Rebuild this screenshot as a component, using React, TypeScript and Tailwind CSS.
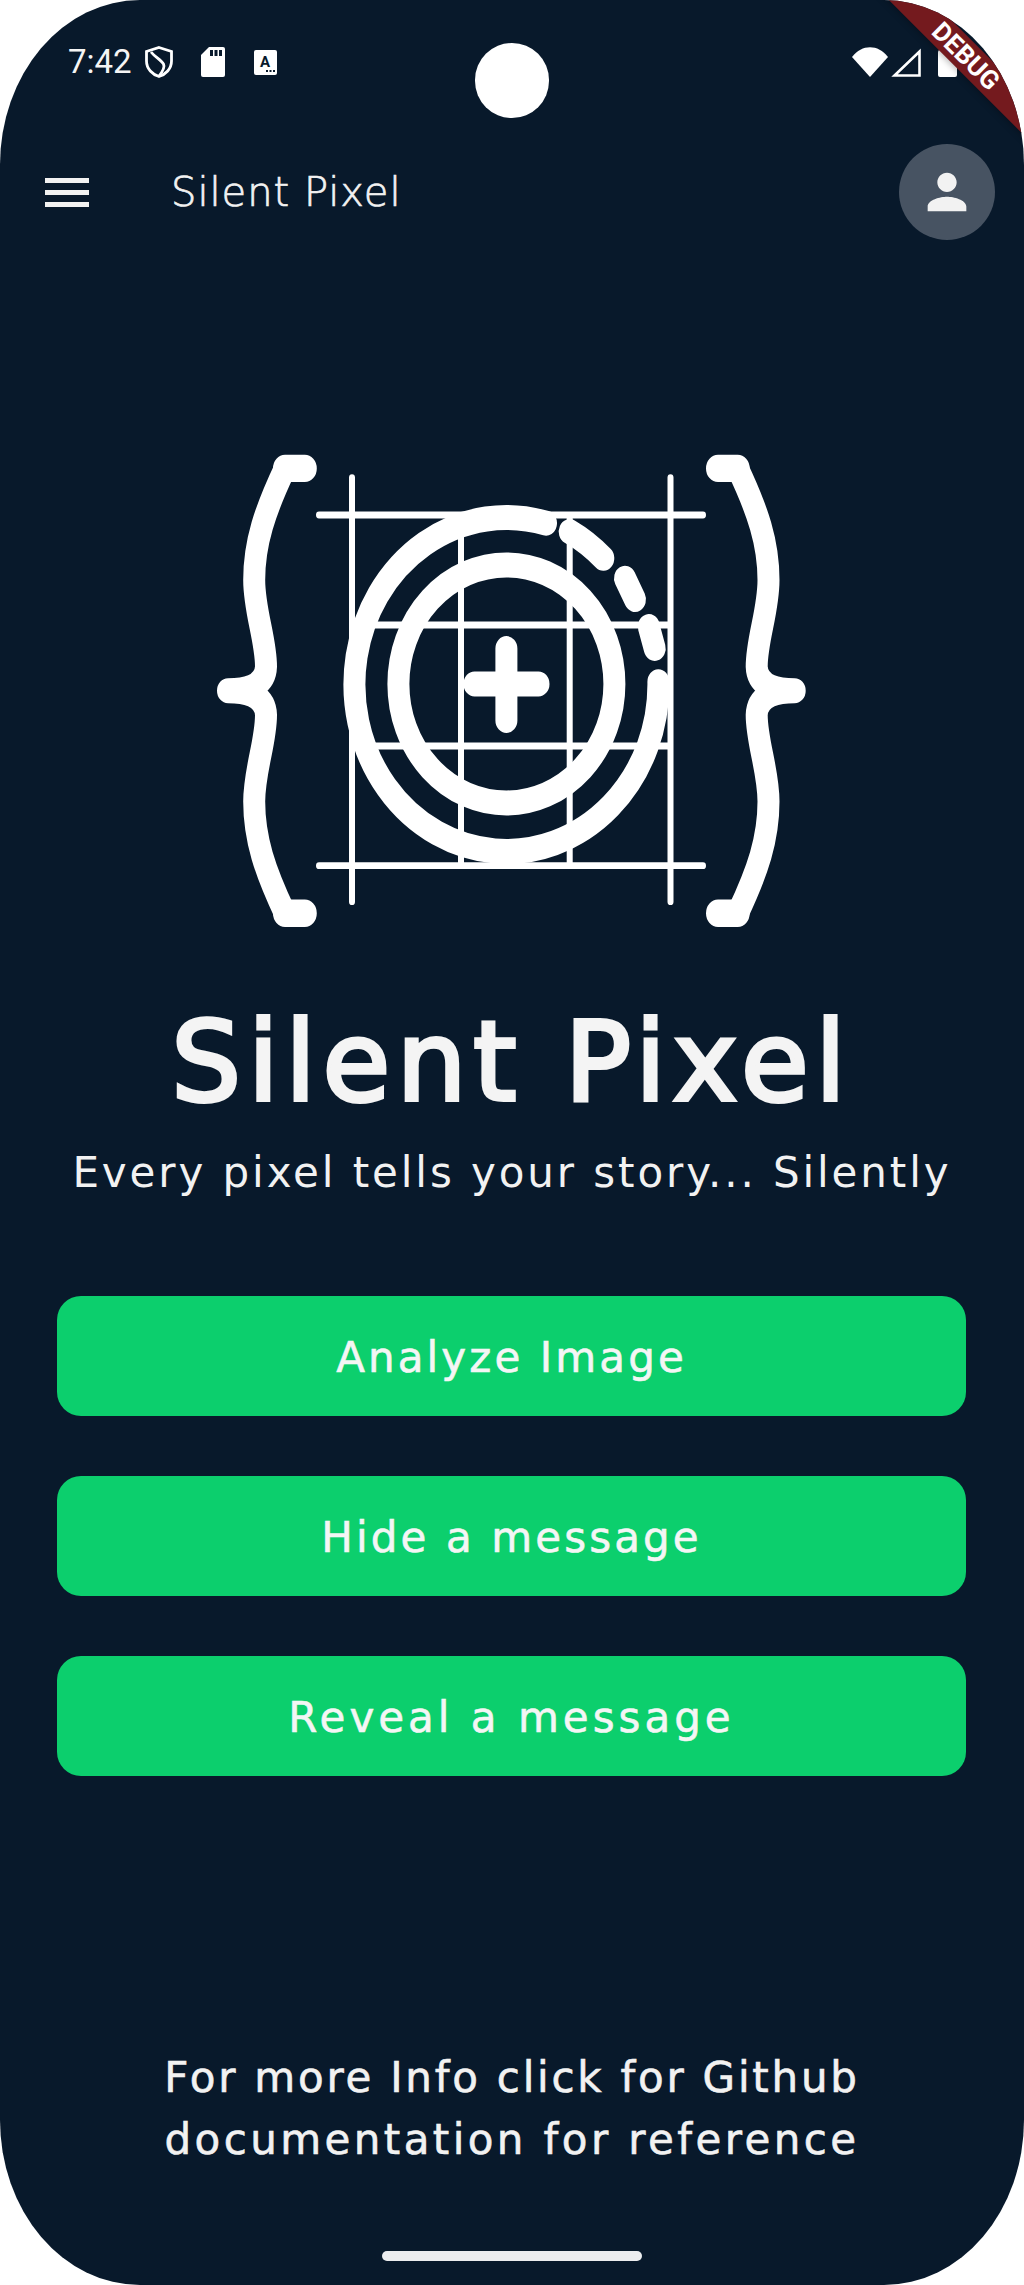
import React from 'react'

const font = "font-['DejaVu_Sans',sans-serif]"

const StatusIcons = () => (
  <div className="flex items-start">
    <svg width="36" height="30" viewBox="0 0 36 30" fill="#fff">
      <path d="M0 10 C10 -3 26 -3 36 10 L18 30 Z" />
    </svg>
    <svg width="30" height="29" viewBox="0 0 30 29" className="ml-[3px] mt-[1px]" fill="none" stroke="#fff" strokeWidth="2.6">
      <path d="M28.5 3.5 V27.5 H3.5 Z" />
    </svg>
    <svg width="19" height="30" viewBox="0 0 19 30" className="ml-[17px]" fill="#fff">
      <path d="M5 2 Q5 0 7 0 H12 Q14 0 14 2 V3 H17 Q19 3 19 5 V28 Q19 30 17 30 H2 Q0 30 0 28 V5 Q0 3 2 3 H5 Z" />
    </svg>
  </div>
)

const Logo = () => {
  const brace =
    'M104.8 24.9 H85 C65 62 54.2 90 54.2 122.8 C54.2 150 66 175 66 198.8 Q65.2 219.9 28 219.9 Q65.2 219.9 66 241.2 C66 265 54.2 290 54.2 317.2 C54.2 350 65 378 85 415.1 H104.8'
  return (
    <svg width="620" height="500" viewBox="0 0 620 500" className="ml-[200px] mt-[152px] shrink-0" fill="none" stroke="#fff" strokeLinecap="round" strokeLinejoin="round">
      <g transform="scale(1 1.14)">
        <g strokeWidth="6">
          <path d="M152 33 V405 M470.5 33 V405 M119 65.8 H503 M119 373.4 H503" />
          <path strokeLinecap="butt" d="M261 66 V373 M369.7 66 V373 M152 162.3 H470.5 M152 268.4 H470.5" />
        </g>
        <g strokeWidth="22">
          <path d={brace} />
          <path d={brace} transform="translate(622.7 0) scale(-1 1)" />
          <path strokeWidth="24" d="M85 24.9 H104.8 M85 415.1 H104.8 M518 24.9 H537.7 M518 415.1 H537.7" />
          <path d="M458.4 212 A152 146.5 0 1 1 346 73" />
          <path d="M369.7 80.4 A152 146.5 0 0 1 403.3 103.8" />
          <path d="M425 121.3 L435 139.8" />
          <path d="M448.8 163.7 L454.7 182.8" />
          <ellipse cx="306.4" cy="214" rx="108" ry="104.4" />
          <path d="M306.4 183 V246 M274.5 214 H338.5" />
        </g>
      </g>
    </svg>
  )
}

const ActionButton = ({ label, tracking }: { label: string; tracking: string }) => (
  <button className={`w-full h-[120px] pt-[3px] rounded-[24px] bg-[#0CCF6D] text-[#F4F6F5] text-[42px] leading-none [-webkit-text-stroke:0.6px_#F4F6F5] ${tracking} ${font}`}>
    {label}
  </button>
)

const App = () => {
  return (
    <div className="w-[1024px] h-[2285px] bg-white">
      <div className="relative flex flex-col w-full h-full overflow-hidden bg-[#08192B] rounded-[140px/165px]">
        {/* status bar */}
        <div className="flex justify-between items-start h-[96px] pt-[47px] pl-[68px] pr-[67px] shrink-0">
          <div className="flex items-start">
            <span className="font-['Roboto',sans-serif] text-[33px] leading-[30px] text-[#F5F5F5]">7:42</span>
            <svg width="28" height="32" viewBox="0 0 28 32" className="ml-[13px] -mt-[1px]" fill="none" stroke="#fff" strokeWidth="2.8">
              <path d="M14 1.5 L26.5 5.5 V15 C26.5 23 20.5 28.5 14 30.5 C7.5 28.5 1.5 23 1.5 15 V5.5 Z" />
              <path d="M6 6 C10 11 16 14 18.5 18 C20 21 18 25 14 30" />
            </svg>
            <svg width="24" height="30" viewBox="0 0 24 30" className="ml-[28px]" fill="#fff">
              <path d="M8 0 H22 Q24 0 24 2 V28 Q24 30 22 30 H2 Q0 30 0 28 V8 Z" />
              <path d="M9 3 H12 V9 H9 Z M13.5 3 H16.5 V9 H13.5 Z M18 3 H21 V9 H18 Z" fill="#08192B" />
            </svg>
            <svg width="23" height="25" viewBox="0 0 23 25" className="ml-[29px] mt-[3px]">
              <rect width="23" height="25" rx="2" fill="#fff" />
              <text x="11" y="17" textAnchor="middle" fontFamily="Roboto, sans-serif" fontWeight="700" fontSize="15" fill="#08192B">A</text>
              <path d="M12 20 H14 V22 H12 Z M15.5 20 H17.5 V22 H15.5 Z M19 20 H21 V22 H19 Z" fill="#08192B" />
            </svg>
          </div>
          <StatusIcons />
        </div>

        {/* app bar */}
        <div className="flex items-center h-[192px] pl-[45px] pr-[29px] shrink-0">
          <div className="flex flex-col gap-[7px] w-[44px]">
            <div className="h-[5px] bg-[#F2F2F2]" />
            <div className="h-[5px] bg-[#F2F2F2]" />
            <div className="h-[5px] bg-[#F2F2F2]" />
          </div>
          <span className={`ml-[82px] text-[40px] leading-none font-extralight tracking-[1px] [-webkit-text-stroke:0.7px_#F2F2F2] text-[#F2F2F2] ${font}`}>Silent Pixel</span>
          <div className="ml-auto flex items-center justify-center w-[96px] h-[96px] rounded-full bg-[#475362]">
            <svg width="58" height="58" viewBox="0 0 24 24" fill="#F2F2F2">
              <path d="M12 12c2.21 0 4-1.79 4-4s-1.79-4-4-4-4 1.79-4 4 1.79 4 4 4zm0 2c-2.67 0-8 1.34-8 4v2h16v-2c0-2.66-5.33-4-8-4z" />
            </svg>
          </div>
        </div>

        <Logo />

        <h1 className={`mt-[62px] text-center text-[110px] leading-[120px] font-normal tracking-[6.7px] [-webkit-text-stroke:4px_#F4F4F4] text-[#F4F4F4] ${font}`}>Silent Pixel</h1>
        <p className={`mt-[21px] text-center text-[42px] leading-[60px] tracking-[2.9px] text-[#F2F2F2] ${font}`}>Every pixel tells your story... Silently</p>

        <div className="flex flex-col gap-[60px] mt-[93px] ml-[57px] w-[909px]">
          <ActionButton label="Analyze Image" tracking="tracking-[3.1px]" />
          <ActionButton label="Hide a message" tracking="tracking-[3.1px]" />
          <ActionButton label="Reveal a message" tracking="tracking-[4px]" />
        </div>

        <p className={`mt-[271px] text-center text-[42px] leading-[62px] text-[#F2F2F2] [-webkit-text-stroke:0.6px_#F2F2F2] ${font}`}>
          <span className="tracking-[2.75px]">For more Info click for Github</span>
          <br />
          <span className="tracking-[3.4px]">documentation for reference</span>
        </p>

        {/* camera, debug ribbon, home bar */}
        <div className="absolute left-[475px] top-[43px] w-[74px] h-[75px] rounded-full bg-white" />
        <div className="absolute left-[815px] top-[40px] w-[300px] h-[30px] rotate-45 flex items-center justify-center pl-[3px] bg-[#741A1E] shadow-[0_2px_6px_rgba(0,0,0,0.25)]">
          <span className="font-['Roboto',sans-serif] font-bold text-[26px] leading-none text-white">DEBUG</span>
        </div>
        <div className="absolute left-[382px] top-[2251px] w-[260px] h-[10px] rounded-full bg-[#ECEDEF]" />
      </div>
    </div>
  )
}

export default App
